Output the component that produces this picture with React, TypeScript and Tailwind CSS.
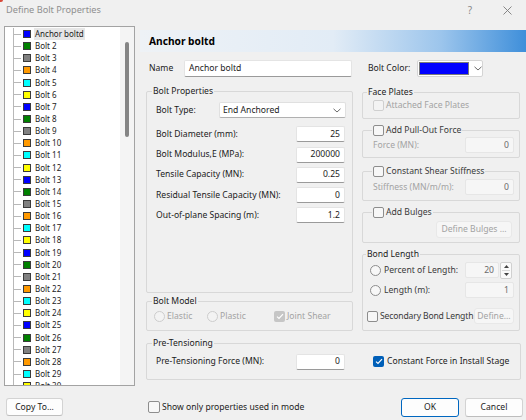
import React from 'react';

const SWATCH = ['bg-[#0000ff]', 'bg-[#008000]', 'bg-[#808080]', 'bg-[#ff9900]', 'bg-[#00ffff]', 'bg-[#ffff00]'];
const bolts = Array.from({ length: 30 }, (_, i) => ({
  name: i === 0 ? 'Anchor boltd' : `Bolt ${i + 1}`,
  swatch: SWATCH[i % 6],
}));

function Chevron() {
  return (
    <svg width="8" height="5" viewBox="0 0 8 5" className="shrink-0">
      <path d="M0.5 0.8 L4 4 L7.5 0.8" fill="none" stroke="#5a5a5a" strokeWidth="0.9" />
    </svg>
  );
}

function Check({ checked = false, disabled = false, size = 'w-[11px] h-[11px]' }: { checked?: boolean; disabled?: boolean; size?: string }) {
  if (checked) {
    return (
      <span className={`${size} shrink-0 rounded-[2px] flex items-center justify-center ${disabled ? 'bg-[#c6c6c6]' : 'bg-[#005fb8]'}`}>
        <svg width="8" height="7" viewBox="0 0 8 7">
          <path d="M1 3.6 L3 5.5 L7 1.2" fill="none" stroke="white" strokeWidth="1.2" />
        </svg>
      </span>
    );
  }
  return (
    <span
      className={`${size} shrink-0 rounded-[2px] border ${disabled ? 'border-[#cfcfcf] bg-[#f3f3f3]' : 'border-[#8d8d8d] bg-[#f7f7f7]'}`}
    />
  );
}

function Radio({ disabled = false }: { disabled?: boolean }) {
  return (
    <span
      className={`w-[11px] h-[11px] shrink-0 rounded-full border ${disabled ? 'border-[#cdcdcd] bg-[#f3f3f3]' : 'border-[#8d8d8d] bg-[#f7f7f7]'}`}
    />
  );
}

function Field({ value, disabled = false, w = 'w-[49px]' }: { value: string; disabled?: boolean; w?: string }) {
  return (
    <div
      className={`${w} h-[16px] shrink-0 rounded-[2px] flex items-center justify-end pr-[4px] border ${
        disabled ? 'bg-[#f6f6f6] border-[#e6e6e6] text-[#6b6b6b]' : 'bg-white border-[#e4e4e4] border-b-[#9a9a9a] text-[#1b1b1b]'
      }`}
    >
      {value}
    </div>
  );
}

function Frame({ legend, legendPos = 'left-[5px]', className, children }: { legend: React.ReactNode; legendPos?: string; className: string; children?: React.ReactNode }) {
  return (
    <div className={`relative border border-[#d8d8d8] rounded-[2px] ${className}`}>
      <div className={`absolute top-[-7px] ${legendPos} h-[13px] px-[1px] bg-[#f0f0f0] flex items-center whitespace-nowrap text-[#1b1b1b]`}>{legend}</div>
      {children}
    </div>
  );
}

function TitleBar() {
  return (
    <div className="h-[26px] shrink-0 relative">
      <div className="absolute left-0 top-0 w-[3px] h-[2px] bg-[#d84a3a] rounded-br-[2px]" />
      <div className="h-[20px] flex items-center pl-[6px] text-[9.2px] text-[#8f8f8f]">
        <span>Define Bolt Properties</span>
        <span className="ml-auto mr-[31px] text-[10px] text-[#8a8a8a]">?</span>
        <svg width="9" height="9" viewBox="0 0 9 9" className="mr-[14px]">
          <path d="M0.5 0.5 L8.5 8.5 M8.5 0.5 L0.5 8.5" stroke="#7a7a7a" strokeWidth="0.9" />
        </svg>
      </div>
    </div>
  );
}

function Tree() {
  return (
    <div className="ml-[4px] w-[131px] h-[360px] shrink-0 border border-[#a3a3a3] bg-white flex overflow-hidden">
      <div className="w-[115px] h-full overflow-hidden pt-[1px]">
        <div className="ml-[8px] border-l border-[#b8b8b8] text-[8px] text-[#1b1b1b]">
          {bolts.map((b, i) => (
            <div key={b.name} className="h-[12.15px] flex items-center">
              <div className="w-[7px] h-px bg-[#b8b8b8]" />
              <span className={`ml-[2px] w-[8px] h-[8px] border border-[#3a3a3a] ${b.swatch}`} />
              <span className={`ml-[3px] px-[1px] h-[12px] flex items-center whitespace-nowrap ${i === 0 ? 'bg-[#e6e6e6]' : ''}`}>{b.name}</span>
            </div>
          ))}
        </div>
      </div>
      <div className="w-[14px] h-full bg-[#f4f4f4] flex justify-center pt-[15px]">
        <div className="w-[4px] h-[95px] rounded-full bg-[#858585]" />
      </div>
    </div>
  );
}

function PropRow({ label, value }: { label: string; value: string }) {
  return (
    <div className="mt-[4.25px] h-[16px] flex items-center pl-[9px] pr-[7px]">
      <span className="flex-1 whitespace-nowrap">{label}</span>
      <Field value={value} />
    </div>
  );
}

function RightPanel() {
  return (
    <div className="ml-[5px] flex-1 flex flex-col">
      <div className="mt-[4px] h-[22px] flex items-center pl-[9px] font-bold text-[10.2px] text-black bg-[linear-gradient(to_right,#eef2f6_0%,#e2ecf6_50%,#9cc5ec_78%,#3f8fda_100%)]">
        Anchor boltd
      </div>

      <div className="mt-[8px] h-[17px] flex items-center pl-[9px]">
        <span className="w-[35px]">Name</span>
        <div className="w-[168px] h-[17px] bg-white border border-[#e4e4e4] border-b-[#9a9a9a] rounded-[2px] flex items-center pl-[4px]">
          Anchor boltd
        </div>
        <span className="ml-[16px] w-[49px] whitespace-nowrap">Bolt Color:</span>
        <div className="w-[66px] h-[17px] bg-white border border-[#d4d4d4] rounded-[2px] flex items-center pl-[1px]">
          <div className="w-[50px] h-[13px] bg-[#0000ff] border border-[#7a7a7a]" />
          <div className="ml-[5px]">
            <Chevron />
          </div>
        </div>
      </div>

      <div className="flex ml-[6px]">
        <div className="w-[207px] flex flex-col">
          <Frame legend="Bolt Properties" className="mt-[14px] h-[202px] pt-[10px]">
            <div className="h-[16px] flex items-center pl-[9px]">
              <span className="w-[63px]">Bolt Type:</span>
              <div className="w-[127px] h-[16px] bg-white border border-[#e0e0e0] border-b-[#b0b0b0] rounded-[2px] flex items-center pl-[3px] pr-[4px]">
                <span className="flex-1">End Anchored</span>
                <Chevron />
              </div>
            </div>
            <div className="h-[4px]" />
            <PropRow label="Bolt Diameter (mm):" value="25" />
            <PropRow label="Bolt Modulus,E (MPa):" value="200000" />
            <PropRow label="Tensile Capacity (MN):" value="0.25" />
            <PropRow label="Residual Tensile Capacity (MN):" value="0" />
            <PropRow label="Out-of-plane Spacing (m):" value="1.2" />
          </Frame>

          <Frame legend="Bolt Model" className="mt-[8px] h-[30px] flex items-center pl-[7px]">
            <div className="w-[53px] flex items-center text-[#a3a3a3]">
              <Radio disabled />
              <span className="ml-[2px]">Elastic</span>
            </div>
            <div className="w-[67px] flex items-center text-[#a3a3a3]">
              <Radio disabled />
              <span className="ml-[2px]">Plastic</span>
            </div>
            <div className="flex items-center text-[#a3a3a3]">
              <Check checked disabled />
              <span className="ml-[2px]">Joint Shear</span>
            </div>
          </Frame>
        </div>

        <div className="ml-[9px] w-[158px] flex flex-col">
          <Frame legend="Face Plates" legendPos="left-[4px]" className="mt-[15px] h-[27px] flex items-center pl-[10px]">
            <Check disabled />
            <span className="ml-[2px] text-[#a3a3a3] whitespace-nowrap">Attached Face Plates</span>
          </Frame>

          <Frame
            legend={
              <>
                <Check />
                <span className="ml-[2px] text-[#3a3a3a]">Add Pull-Out Force</span>
              </>
            }
            legendPos="left-[9px]"
            className="mt-[11px] h-[28px] pt-[6px]"
          >
            <div className="h-[16px] flex items-center pl-[10px] pr-[5px] text-[#a3a3a3]">
              <span className="flex-1">Force (MN):</span>
              <Field value="0" disabled />
            </div>
          </Frame>

          <Frame
            legend={
              <>
                <Check />
                <span className="ml-[2px] text-[#3a3a3a]">Constant Shear Stiffness</span>
              </>
            }
            legendPos="left-[9px]"
            className="mt-[13px] h-[30px] pt-[7px]"
          >
            <div className="h-[16px] flex items-center pl-[10px] pr-[5px] text-[#a3a3a3]">
              <span className="flex-1 whitespace-nowrap">Stiffness (MN/m/m):</span>
              <Field value="0" disabled />
            </div>
          </Frame>

          <Frame
            legend={
              <>
                <Check />
                <span className="ml-[2px] text-[#3a3a3a]">Add Bulges</span>
              </>
            }
            legendPos="left-[9px]"
            className="mt-[11px] h-[31px] pt-[8px]"
          >
            <div className="flex justify-end pr-[7px]">
              <div className="w-[76px] h-[17px] rounded-[3px] bg-[#f6f6f6] border border-[#e8e8e8] flex items-center justify-center text-[#a3a3a3] whitespace-nowrap">
                Define Bulges ...
              </div>
            </div>
          </Frame>

          <Frame legend="Bond Length" legendPos="left-[3px]" className="mt-[11px] h-[77px] pt-[7px]">
            <div className="h-[16px] flex items-center pl-[7px] pr-[7px] text-[#3a3a3a]">
              <Radio />
              <span className="ml-[3px] flex-1 whitespace-nowrap">Percent of Length:</span>
              <Field value="20" disabled w="w-[34px]" />
              <div className="ml-[1px] w-[12px] h-[17px] border border-[#d0d0d0] bg-[#fafafa] rounded-[2px] flex flex-col items-center justify-center gap-[2px]">
                <svg width="5" height="3" viewBox="0 0 5 3">
                  <path d="M0 3 L2.5 0 L5 3 Z" fill="#444" />
                </svg>
                <div className="w-[8px] h-px bg-[#d8d8d8]" />
                <svg width="5" height="3" viewBox="0 0 5 3">
                  <path d="M0 0 L2.5 3 L5 0 Z" fill="#444" />
                </svg>
              </div>
            </div>
            <div className="mt-[4px] h-[16px] flex items-center pl-[7px] pr-[5px] text-[#3a3a3a]">
              <Radio />
              <span className="ml-[3px] flex-1">Length (m):</span>
              <Field value="1" disabled />
            </div>
            <div className="mt-[10px] h-[16px] flex items-center pl-[4px] pr-[5px] text-[#3a3a3a]">
              <Check />
              <span className="ml-[2px] flex-1 whitespace-nowrap tracking-[-0.15px]">Secondary Bond Length</span>
              <div className="w-[40px] h-[16px] shrink-0 rounded-[3px] bg-[#f6f6f6] border border-[#e8e8e8] flex items-center justify-center text-[#a3a3a3]">
                Define...
              </div>
            </div>
          </Frame>
        </div>
      </div>

      <Frame legend="Pre-Tensioning" className="mt-[12px] ml-[6px] w-[375px] h-[37px] flex items-center pl-[9px]">
        <span className="w-[140px] whitespace-nowrap">Pre-Tensioning Force (MN):</span>
        <Field value="0" />
        <div className="ml-[28px] flex items-center">
          <Check checked />
          <span className="ml-[3px] whitespace-nowrap">Constant Force in Install Stage</span>
        </div>
      </Frame>
    </div>
  );
}

function BottomBar() {
  return (
    <div className="flex-1 flex items-center pt-[8px]">
      <div className="ml-[6px] w-[57px] h-[18px] rounded-[3px] bg-[#fdfdfd] border border-[#d3d3d3] border-b-[#bdbdbd] flex items-center justify-center whitespace-nowrap">
        Copy To...
      </div>
      <div className="ml-[85px] flex items-center">
        <Check size="w-[12px] h-[12px]" />
        <span className="ml-[2px] whitespace-nowrap">Show only properties used in mode</span>
      </div>
      <div className="ml-auto w-[58px] h-[19px] rounded-[3px] bg-[#fdfdfd] border border-[#0067c0] flex items-center justify-center">
        OK
      </div>
      <div className="ml-[6px] mr-[3px] w-[58px] h-[19px] rounded-[3px] bg-[#fdfdfd] border border-[#d3d3d3] border-b-[#bdbdbd] flex items-center justify-center">
        Cancel
      </div>
    </div>
  );
}

export default function App() {
  return (
    <div className="w-[526px] h-[420px] overflow-hidden bg-[#f0f0f0] text-[#1b1b1b] font-['Noto_Sans',sans-serif] text-[8.6px] leading-none flex flex-col">
      <TitleBar />
      <div className="flex h-[360px] shrink-0">
        <Tree />
        <RightPanel />
      </div>
      <BottomBar />
    </div>
  );
}
